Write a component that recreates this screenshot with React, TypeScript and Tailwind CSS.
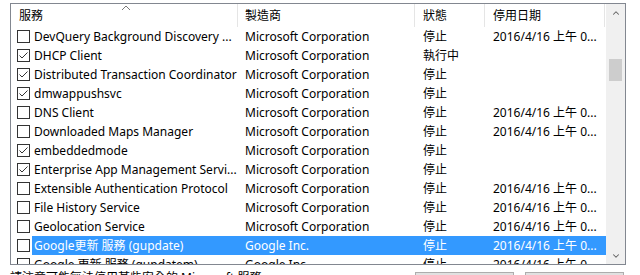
import { ChevronDown, ChevronUp } from "lucide-react";

type Row = {
  name: string;
  checked: boolean;
  maker: string;
  status: string;
  date: string;
  selected?: boolean;
};

const rows: Row[] = [
  { name: "DevQuery Background Discovery ...", checked: false, maker: "Microsoft Corporation", status: "停止", date: "2016/4/16 上午 0..." },
  { name: "DHCP Client", checked: true, maker: "Microsoft Corporation", status: "執行中", date: "" },
  { name: "Distributed Transaction Coordinator", checked: true, maker: "Microsoft Corporation", status: "停止", date: "" },
  { name: "dmwappushsvc", checked: true, maker: "Microsoft Corporation", status: "停止", date: "" },
  { name: "DNS Client", checked: false, maker: "Microsoft Corporation", status: "停止", date: "2016/4/16 上午 0..." },
  { name: "Downloaded Maps Manager", checked: false, maker: "Microsoft Corporation", status: "停止", date: "2016/4/16 上午 0..." },
  { name: "embeddedmode", checked: true, maker: "Microsoft Corporation", status: "停止", date: "" },
  { name: "Enterprise App Management Servi...", checked: true, maker: "Microsoft Corporation", status: "停止", date: "" },
  { name: "Extensible Authentication Protocol", checked: false, maker: "Microsoft Corporation", status: "停止", date: "2016/4/16 上午 0..." },
  { name: "File History Service", checked: false, maker: "Microsoft Corporation", status: "停止", date: "2016/4/16 上午 0..." },
  { name: "Geolocation Service", checked: false, maker: "Microsoft Corporation", status: "停止", date: "2016/4/16 上午 0..." },
  { name: "Google更新 服務 (gupdate)", checked: false, maker: "Google Inc.", status: "停止", date: "2016/4/16 上午 0...", selected: true },
  { name: "Google 更新 服務 (gupdatem)", checked: false, maker: "Google Inc.", status: "停止", date: "2016/4/16 上午 0..." },
];

const Check = ({ checked }: { checked: boolean }) => (
  <div className="w-[13px] h-[13px] border border-[#333] bg-white shrink-0 flex items-center justify-center">
    {checked && (
      <svg width="11" height="11" viewBox="0 0 11 11">
        <path d="M1.5 5.5 L4 8 L9.5 2.5" fill="none" stroke="#333" strokeWidth="1" />
      </svg>
    )}
  </div>
);

export default function App() {
  return (
    <div
      className="w-[640px] h-[275px] overflow-hidden bg-white text-[12px] text-black"
      style={{ fontFamily: '"Noto Sans", "Noto Sans CJK TC", sans-serif' }}
    >
      <div className="pl-[10px] pt-[3px]">
        <div className="w-[616px] h-[262px] border border-[#828790] flex overflow-hidden">
          {/* list */}
          <div className="w-[595px] flex flex-col">
            <div className="h-[23px] flex shrink-0 relative">
              <svg className="absolute left-[110px] top-[1px]" width="10" height="6" viewBox="0 0 10 6">
                <path d="M1 5 L5 1 L9 5" fill="none" stroke="#7a7a7a" strokeWidth="1" />
              </svg>
              <div className="w-[227px] border-r border-[#e5e5e5] pl-[8px] pt-[1px] flex items-center">服務</div>
              <div className="w-[177px] border-r border-[#e5e5e5] pl-[7px] pt-[1px] flex items-center">製造商</div>
              <div className="w-[70px] border-r border-[#e5e5e5] pl-[8px] pt-[1px] flex items-center">狀態</div>
              <div className="w-[120px] border-r border-[#e5e5e5] pl-[8px] pt-[1px] flex items-center">停用日期</div>
            </div>
            {rows.map((r) => (
              <div key={r.name} className="h-[19px] flex shrink-0 whitespace-nowrap">
                <div className="w-[21px] pl-[6px] flex items-center">
                  <Check checked={r.checked} />
                </div>
                <div className={`flex flex-1 ${r.selected ? "bg-[#3399ff] text-white" : ""}`}>
                  <div className="w-[206px] pl-[2px] pt-[1px] flex items-center overflow-hidden">{r.name}</div>
                  <div className="w-[177px] pl-[7px] pt-[1px] flex items-center">{r.maker}</div>
                  <div className="w-[70px] pl-[8px] pt-[1px] flex items-center">{r.status}</div>
                  <div className="w-[120px] pl-[8px] pt-[1px] flex items-center">{r.date}</div>
                </div>
              </div>
            ))}
          </div>
          {/* scrollbar */}
          <div className="w-[19px] bg-[#f0f0f0] flex flex-col items-center">
            <div className="h-[17px] w-full flex items-center justify-center">
              <ChevronUp size={10} strokeWidth={2.5} color="#606060" />
            </div>
            <div className="mt-[38px] w-[13px] h-[22px] bg-[#cdcdcd]" />
            <div className="flex-1" />
            <div className="h-[17px] w-full flex items-center justify-center">
              <ChevronDown size={10} strokeWidth={2.5} color="#606060" />
            </div>
          </div>
        </div>
        <div className="flex items-start">
          <div className="w-[405px] pt-[4px] whitespace-nowrap">請注意可能無法停用某些安全的 Microsoft 服務。</div>
          <div className="w-[99px] h-[23px] mt-[7px] border border-[#adadad] bg-[#e1e1e1]" />
          <div className="w-[99px] h-[23px] mt-[7px] ml-[11px] border border-[#adadad] bg-[#e1e1e1]" />
        </div>
      </div>
    </div>
  );
}
